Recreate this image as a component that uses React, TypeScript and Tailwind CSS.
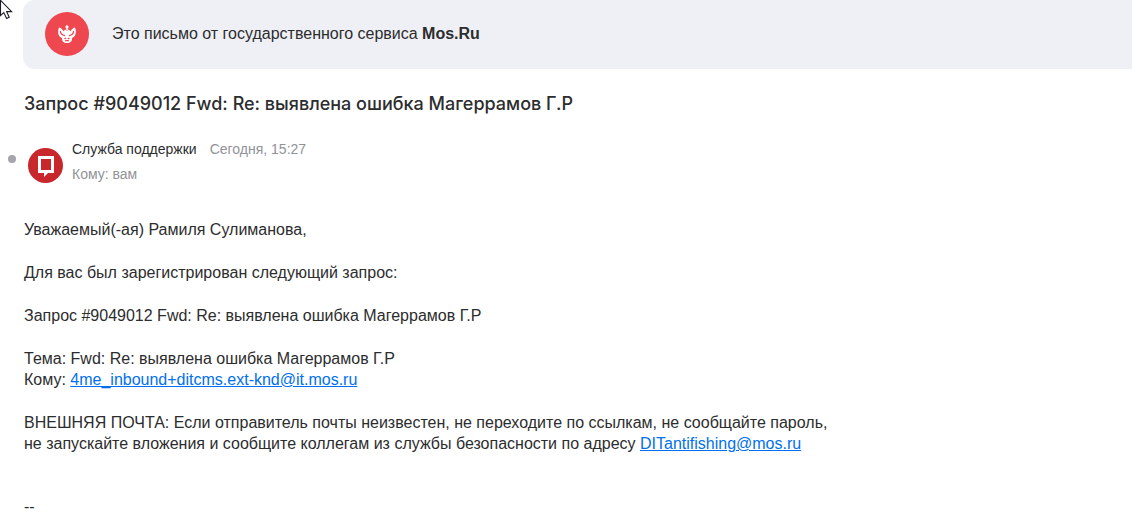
import { ReactNode } from "react";

const requestTitle = "Запрос #9049012 Fwd: Re: выявлена ошибка Магеррамов Г.Р";

const MailLink = ({ email }: { email: string }) => (
  <a href={`mailto:${email}`} className="text-[#0070f0] underline">
    {email}
  </a>
);

const Paragraph = ({ children }: { children: ReactNode }) => (
  <p className="max-w-4xl">{children}</p>
);

const CursorIcon = () => (
  <svg
    className="absolute left-0 top-0"
    width="13"
    height="20"
    viewBox="0 0 13 20"
    aria-hidden="true"
  >
    <path
      d="M0.5 -1V15.5L3.8 12.6L6.6 18.5L9.2 17.3L6.6 11.6H11.6L0.5 0.3Z"
      fill="white"
      stroke="#1c1c28"
      strokeWidth="1.1"
    />
  </svg>
);

const GovernmentIcon = () => (
  <svg
    className="size-11 shrink-0"
    viewBox="0 0 44 44"
    fill="none"
    aria-hidden="true"
  >
    <circle cx="22" cy="22" r="22" fill="#ee4750" />
    <path
      d="M14 15.4C12.4 19.2 12.8 24.2 17 26C16.6 29 18.6 31 22 31C25.4 31 27.4 29 27 26C31.2 24.2 31.6 19.2 30 15.4C27.8 16 26.4 17.4 25.6 19.2L23.6 17.6L22 19L20.4 17.6L18.4 19.2C17.6 17.4 16.2 16 14 15.4Z"
      fill="white"
    />
    <path d="M22 13.2V18.5M20.4 15H23.6" stroke="white" strokeWidth="1.6" />
    <g stroke="#ee4750" strokeLinecap="round" strokeLinejoin="round">
      <path
        d="M15.4 19.4C15.6 21.8 17 23 19.6 23.6M28.6 19.4C28.4 21.8 27 23 24.4 23.6"
        strokeWidth="1.2"
      />
      <path d="M20 26.6H20.6M23.4 26.6H24" strokeWidth="1.5" />
      <path d="M20.6 28.7H23.4" strokeWidth="1.2" />
    </g>
  </svg>
);

const SenderAvatar = () => (
  <svg
    className="mt-2 size-[35px] shrink-0"
    viewBox="0 0 35 35"
    fill="none"
    aria-hidden="true"
  >
    <circle cx="17.5" cy="17.5" r="17.5" fill="#c8282b" />
    <path
      fillRule="evenodd"
      d="M10 8H26V25H20L16 29V25H10V8ZM13 11V22H23V11H13Z"
      fill="white"
    />
  </svg>
);

const App = () => {
  return (
    <div className="relative overflow-hidden bg-white font-['Liberation_Sans',Arial,sans-serif] text-[#2c2d2e]">
      <CursorIcon />
      <div className="ml-[23px] flex items-center gap-[23px] rounded-l-xl bg-[#eff0f5] pb-[13px] pl-[22px] pt-3">
        <GovernmentIcon />
        <p className="text-base">
          Это письмо от государственного сервиса <b>Mos.Ru</b>
        </p>
      </div>

      <main className="px-6">
        <h1 className="mt-[23px] font-['Inter',sans-serif] text-lg leading-6 font-medium">
          {requestTitle}
        </h1>

        <header className="-ml-4 mt-6 flex text-sm leading-[18px]">
          <span className="mt-[15px] mr-3 size-2 shrink-0 rounded-full bg-[#a5a6ab]" />
          <SenderAvatar />
          <div className="ml-[9px] flex flex-col gap-[7px]">
            <div className="flex gap-[13px]">
              <span>Служба поддержки</span>
              <time className="text-[#919399]">Сегодня, 15:27</time>
            </div>
            <div className="text-[#919399]">Кому: вам</div>
          </div>
        </header>

        <article className="mt-9 flex flex-col gap-[22px] text-base leading-[21px]">
          <Paragraph>Уважаемый(-ая) Рамиля Сулиманова,</Paragraph>
          <Paragraph>Для вас был зарегистрирован следующий запрос:</Paragraph>
          <Paragraph>{requestTitle}</Paragraph>
          <Paragraph>
            Тема: Fwd: Re: выявлена ошибка Магеррамов Г.Р
            <br />
            Кому: <MailLink email="4me_inbound+ditcms.ext-knd@it.mos.ru" />
          </Paragraph>
          <Paragraph>
            ВНЕШНЯЯ ПОЧТА: Если отправитель почты неизвестен, не переходите по
            ссылкам, не сообщайте пароль,
            <br />
            не запускайте вложения и сообщите коллегам из службы безопасности по
            адресу <MailLink email="DITantifishing@mos.ru" />
          </Paragraph>
          <p className="mt-5">--</p>
        </article>
      </main>
    </div>
  );
};

export default App;
